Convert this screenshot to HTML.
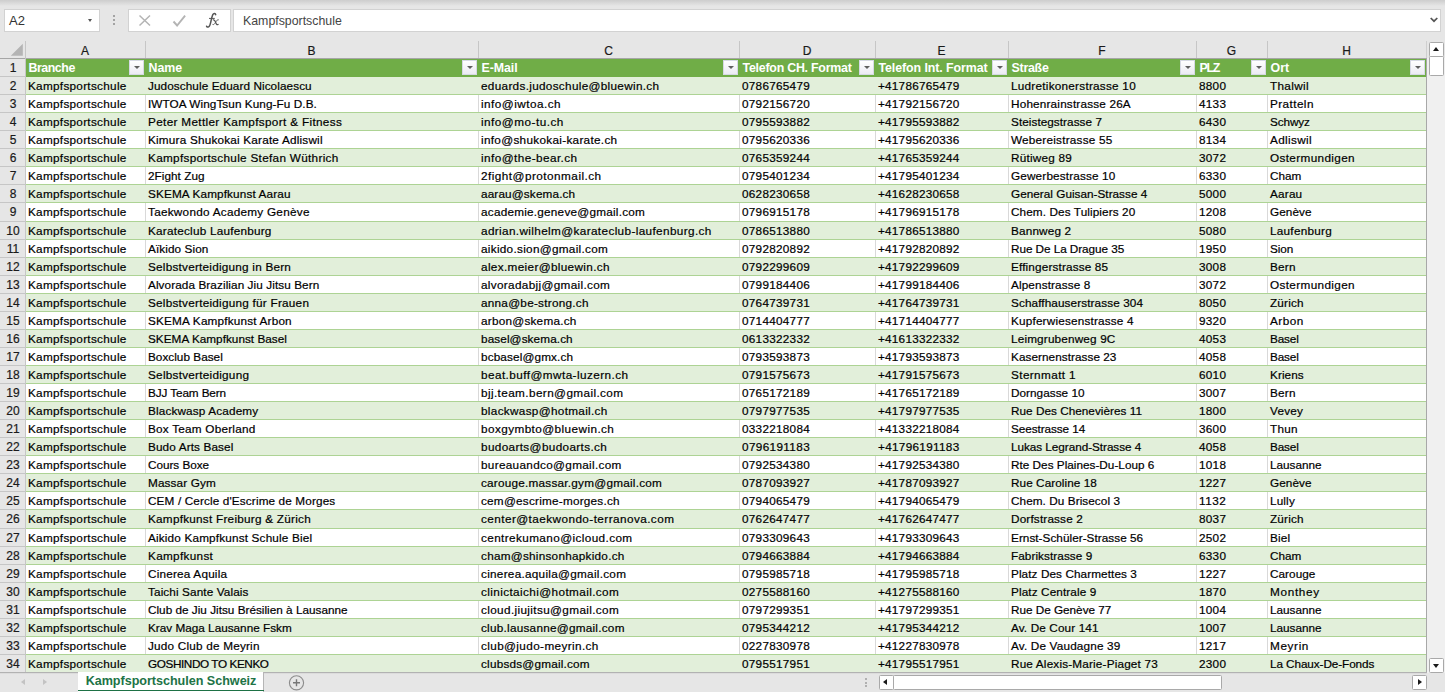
<!DOCTYPE html>
<html><head><meta charset="utf-8"><title>Kampfsportschulen Schweiz</title>
<style>
html,body{margin:0;padding:0}
body{width:1445px;height:692px;overflow:hidden;position:relative;background:#e6e6e6;font-family:"Liberation Sans",sans-serif;color:#000}
.abs{position:absolute}
#topgrad{left:0;top:0;width:1445px;height:6px;background:linear-gradient(#cdcdcd,#e6e6e6)}
.box{position:absolute;background:#fff;border:1px solid #d2d2d2;box-sizing:border-box}
.cell{position:absolute;white-space:nowrap;overflow:hidden;font-size:11.75px;line-height:18.06px;height:18.06px;padding-left:3.0px;box-sizing:border-box;-webkit-text-stroke:0.2px #000}
.hc{position:absolute;font-size:12px;text-align:center;line-height:18px;height:17px;color:#1a1a1a;-webkit-text-stroke:0.2px #1a1a1a}
.rn{position:absolute;left:0.5px;width:25px;text-align:center;font-size:12px;color:#1a1a1a;-webkit-text-stroke:0.2px #1a1a1a}
.hd{font-weight:bold;color:#fff;font-size:12.4px;padding-left:3.5px;-webkit-text-stroke:0}
.fb{position:absolute;width:15px;height:15px;box-sizing:border-box;background:linear-gradient(#ffffff,#ebebf3);border:1px solid #d6d9e4}
.fb:after{content:"";position:absolute;left:3.5px;top:5px;border-left:3px solid transparent;border-right:3px solid transparent;border-top:3.5px solid #5f5f5f}
.vl{position:absolute;width:1px}
.hl{position:absolute;height:1px}
</style></head><body>
<div class="abs" id="topgrad"></div>

<div class="box" style="left:4px;top:9px;width:96px;height:23px"></div>
<div class="abs" style="left:9px;top:12px;font-size:13px;line-height:17px;color:#333">A2</div>
<div class="abs" style="left:88px;top:19px;border-left:2.7px solid transparent;border-right:2.7px solid transparent;border-top:3px solid #555"></div>
<div class="abs" style="left:113px;top:15px;width:2px;height:2px;background:#a3a3a3"></div>
<div class="abs" style="left:113px;top:19px;width:2px;height:2px;background:#a3a3a3"></div>
<div class="abs" style="left:113px;top:23px;width:2px;height:2px;background:#a3a3a3"></div>
<div class="box" style="left:128px;top:9px;width:103px;height:23px"></div>
<svg class="abs" style="left:128px;top:9px" width="103" height="23" viewBox="0 0 103 23"><g fill="none" stroke="#b4b4b4"><path stroke-width="1.5" d="M11.5 6.5l10.5 10M22 6.5l-10.5 10"/><path stroke-width="1.9" d="M45.5 12.5l3.6 4 8-9.8"/></g><g fill="none" stroke="#555" stroke-linecap="round"><path stroke-width="1.5" d="M87.7 5.7C87.5 4.2 85.6 4 84.8 5.6C84 7.2 83.6 9.5 83 12C82.4 14.6 82 17.4 80.6 17.9C79.6 18.3 78.8 17.9 78.6 17.2"/><path stroke-width="1" d="M81.4 9.4H86.4"/><path stroke-width="1.25" d="M85.3 10.9C86.5 10.5 87 11.6 87.6 13.2C88.2 15 88.8 16 90.1 15.5"/><path stroke-width="0.9" d="M90.4 10.7C89.5 10.4 88.6 11.5 87.6 13.2C86.6 15 85.8 16 84.9 15.6"/></g></svg>
<div class="box" style="left:233px;top:9px;width:1208px;height:23px"></div>
<div class="abs" style="left:243px;top:13px;font-size:12.35px;line-height:17px;color:#444">Kampfsportschule</div>
<svg class="abs" style="left:1428.6px;top:16.4px" width="10" height="8" viewBox="0 0 10 8"><path d="M1.7 2l3.3 3.2L8.3 2" fill="none" stroke="#555" stroke-width="1.7"/></svg>
<svg class="abs" style="left:0;top:41px" width="25" height="17"><path d="M22.8 2.8v12h-12z" fill="#b4b4b4"/></svg>
<div class="hc" style="left:25px;top:42px;width:120px">A</div>
<div class="hc" style="left:145px;top:42px;width:333px">B</div>
<div class="hc" style="left:478px;top:42px;width:261px">C</div>
<div class="hc" style="left:739px;top:42px;width:136px">D</div>
<div class="hc" style="left:875px;top:42px;width:133px">E</div>
<div class="hc" style="left:1008px;top:42px;width:188px">F</div>
<div class="hc" style="left:1196px;top:42px;width:71px">G</div>
<div class="hc" style="left:1267px;top:42px;width:159px">H</div>
<div class="vl" style="left:25px;top:41px;height:17px;background:#c6c6c6"></div>
<div class="vl" style="left:145px;top:41px;height:17px;background:#c6c6c6"></div>
<div class="vl" style="left:478px;top:41px;height:17px;background:#c6c6c6"></div>
<div class="vl" style="left:739px;top:41px;height:17px;background:#c6c6c6"></div>
<div class="vl" style="left:875px;top:41px;height:17px;background:#c6c6c6"></div>
<div class="vl" style="left:1008px;top:41px;height:17px;background:#c6c6c6"></div>
<div class="vl" style="left:1196px;top:41px;height:17px;background:#c6c6c6"></div>
<div class="vl" style="left:1267px;top:41px;height:17px;background:#c6c6c6"></div>
<div class="vl" style="left:1426px;top:41px;height:17px;background:#c6c6c6"></div>
<div class="hl" style="left:0;top:58px;width:1427px;background:#a6a6a6"></div>
<div class="abs" style="left:25px;top:59.0px;width:1401px;height:614.04px;background:#fff"></div>
<div class="abs" style="left:25px;top:59px;width:1401px;height:18px;background:#70ad47"></div>
<div class="rn" style="top:59px;height:18px;line-height:18px">1</div>
<div class="hl" style="left:0;top:76px;width:25px;background:#c6c6c6"></div>
<div class="cell hd" style="left:25px;top:59px;width:120px;letter-spacing:-0.469px">Branche</div>
<div class="cell hd" style="left:145px;top:59px;width:333px;letter-spacing:-0.043px">Name</div>
<div class="cell hd" style="left:478px;top:59px;width:261px;letter-spacing:-0.068px">E-Mail</div>
<div class="cell hd" style="left:739px;top:59px;width:136px;letter-spacing:-0.236px">Telefon CH. Format</div>
<div class="cell hd" style="left:875px;top:59px;width:133px;letter-spacing:-0.085px">Telefon Int. Format</div>
<div class="cell hd" style="left:1008px;top:59px;width:188px;letter-spacing:-0.248px">Straße</div>
<div class="cell hd" style="left:1196px;top:59px;width:71px;letter-spacing:-1.306px">PLZ</div>
<div class="cell hd" style="left:1267px;top:59px;width:159px;letter-spacing:0.049px">Ort</div>
<div class="fb" style="left:129px;top:60px"></div>
<div class="fb" style="left:462px;top:60px"></div>
<div class="fb" style="left:723px;top:60px"></div>
<div class="fb" style="left:859px;top:60px"></div>
<div class="fb" style="left:992px;top:60px"></div>
<div class="fb" style="left:1180px;top:60px"></div>
<div class="fb" style="left:1251px;top:60px"></div>
<div class="fb" style="left:1410px;top:60px"></div>
<div class="abs" style="left:25px;top:77px;width:1401px;height:18px;background:#e2efda"></div>
<div class="hl" style="left:25px;top:94px;width:1401px;background:#add394"></div>
<div class="rn" style="top:77px;height:18px;line-height:18px">2</div>
<div class="hl" style="left:0;top:94px;width:25px;background:#c6c6c6"></div>
<div class="cell" style="left:25px;top:77px;width:120px;letter-spacing:0.284px">Kampfsportschule</div>
<div class="cell" style="left:145px;top:77px;width:333px;letter-spacing:0.085px">Judoschule Eduard Nicolaescu</div>
<div class="cell" style="left:478px;top:77px;width:261px;letter-spacing:0.311px">eduards.judoschule@bluewin.ch</div>
<div class="cell" style="left:739px;top:77px;width:136px;letter-spacing:0.268px">0786765479</div>
<div class="cell" style="left:875px;top:77px;width:133px;letter-spacing:0.231px">+41786765479</div>
<div class="cell" style="left:1008px;top:77px;width:188px;letter-spacing:0.245px">Ludretikonerstrasse 10</div>
<div class="cell" style="left:1196px;top:77px;width:71px;letter-spacing:0.269px">8800</div>
<div class="cell" style="left:1267px;top:77px;width:159px;letter-spacing:0.321px">Thalwil</div>
<div class="hl" style="left:25px;top:112px;width:1401px;background:#add394"></div>
<div class="rn" style="top:95px;height:18px;line-height:18px">3</div>
<div class="hl" style="left:0;top:112px;width:25px;background:#c6c6c6"></div>
<div class="cell" style="left:25px;top:95px;width:120px;letter-spacing:0.284px">Kampfsportschule</div>
<div class="cell" style="left:145px;top:95px;width:333px;letter-spacing:0.072px">IWTOA WingTsun Kung-Fu D.B.</div>
<div class="cell" style="left:478px;top:95px;width:261px;letter-spacing:0.467px">info@iwtoa.ch</div>
<div class="cell" style="left:739px;top:95px;width:136px;letter-spacing:0.268px">0792156720</div>
<div class="cell" style="left:875px;top:95px;width:133px;letter-spacing:0.231px">+41792156720</div>
<div class="cell" style="left:1008px;top:95px;width:188px;letter-spacing:0.181px">Hohenrainstrasse 26A</div>
<div class="cell" style="left:1196px;top:95px;width:71px;letter-spacing:0.269px">4133</div>
<div class="cell" style="left:1267px;top:95px;width:159px;letter-spacing:0.418px">Pratteln</div>
<div class="abs" style="left:25px;top:113px;width:1401px;height:18px;background:#e2efda"></div>
<div class="hl" style="left:25px;top:130px;width:1401px;background:#add394"></div>
<div class="rn" style="top:113px;height:18px;line-height:18px">4</div>
<div class="hl" style="left:0;top:130px;width:25px;background:#c6c6c6"></div>
<div class="cell" style="left:25px;top:113px;width:120px;letter-spacing:0.284px">Kampfsportschule</div>
<div class="cell" style="left:145px;top:113px;width:333px;letter-spacing:0.332px">Peter Mettler Kampfsport &amp; Fitness</div>
<div class="cell" style="left:478px;top:113px;width:261px;letter-spacing:0.480px">info@mo-tu.ch</div>
<div class="cell" style="left:739px;top:113px;width:136px;letter-spacing:0.268px">0795593882</div>
<div class="cell" style="left:875px;top:113px;width:133px;letter-spacing:0.231px">+41795593882</div>
<div class="cell" style="left:1008px;top:113px;width:188px;letter-spacing:0.052px">Steistegstrasse 7</div>
<div class="cell" style="left:1196px;top:113px;width:71px;letter-spacing:0.269px">6430</div>
<div class="cell" style="left:1267px;top:113px;width:159px;letter-spacing:-0.104px">Schwyz</div>
<div class="hl" style="left:25px;top:148px;width:1401px;background:#add394"></div>
<div class="rn" style="top:131px;height:18px;line-height:18px">5</div>
<div class="hl" style="left:0;top:148px;width:25px;background:#c6c6c6"></div>
<div class="cell" style="left:25px;top:131px;width:120px;letter-spacing:0.284px">Kampfsportschule</div>
<div class="cell" style="left:145px;top:131px;width:333px;letter-spacing:0.200px">Kimura Shukokai Karate Adliswil</div>
<div class="cell" style="left:478px;top:131px;width:261px;letter-spacing:0.302px">info@shukokai-karate.ch</div>
<div class="cell" style="left:739px;top:131px;width:136px;letter-spacing:0.268px">0795620336</div>
<div class="cell" style="left:875px;top:131px;width:133px;letter-spacing:0.231px">+41795620336</div>
<div class="cell" style="left:1008px;top:131px;width:188px;letter-spacing:0.219px">Webereistrasse 55</div>
<div class="cell" style="left:1196px;top:131px;width:71px;letter-spacing:0.269px">8134</div>
<div class="cell" style="left:1267px;top:131px;width:159px;letter-spacing:0.345px">Adliswil</div>
<div class="abs" style="left:25px;top:149px;width:1401px;height:18px;background:#e2efda"></div>
<div class="hl" style="left:25px;top:166px;width:1401px;background:#add394"></div>
<div class="rn" style="top:149px;height:18px;line-height:18px">6</div>
<div class="hl" style="left:0;top:166px;width:25px;background:#c6c6c6"></div>
<div class="cell" style="left:25px;top:149px;width:120px;letter-spacing:0.284px">Kampfsportschule</div>
<div class="cell" style="left:145px;top:149px;width:333px;letter-spacing:0.302px">Kampfsportschule Stefan Wüthrich</div>
<div class="cell" style="left:478px;top:149px;width:261px;letter-spacing:0.430px">info@the-bear.ch</div>
<div class="cell" style="left:739px;top:149px;width:136px;letter-spacing:0.268px">0765359244</div>
<div class="cell" style="left:875px;top:149px;width:133px;letter-spacing:0.231px">+41765359244</div>
<div class="cell" style="left:1008px;top:149px;width:188px;letter-spacing:0.234px">Rütiweg 89</div>
<div class="cell" style="left:1196px;top:149px;width:71px;letter-spacing:0.269px">3072</div>
<div class="cell" style="left:1267px;top:149px;width:159px;letter-spacing:0.356px">Ostermundigen</div>
<div class="hl" style="left:25px;top:184px;width:1401px;background:#add394"></div>
<div class="rn" style="top:167px;height:18px;line-height:18px">7</div>
<div class="hl" style="left:0;top:184px;width:25px;background:#c6c6c6"></div>
<div class="cell" style="left:25px;top:167px;width:120px;letter-spacing:0.284px">Kampfsportschule</div>
<div class="cell" style="left:145px;top:167px;width:333px;letter-spacing:0.041px">2Fight Zug</div>
<div class="cell" style="left:478px;top:167px;width:261px;letter-spacing:0.471px">2fight@protonmail.ch</div>
<div class="cell" style="left:739px;top:167px;width:136px;letter-spacing:0.268px">0795401234</div>
<div class="cell" style="left:875px;top:167px;width:133px;letter-spacing:0.231px">+41795401234</div>
<div class="cell" style="left:1008px;top:167px;width:188px;letter-spacing:0.154px">Gewerbestrasse 10</div>
<div class="cell" style="left:1196px;top:167px;width:71px;letter-spacing:0.269px">6330</div>
<div class="cell" style="left:1267px;top:167px;width:159px;letter-spacing:0.001px">Cham</div>
<div class="abs" style="left:25px;top:185px;width:1401px;height:18px;background:#e2efda"></div>
<div class="hl" style="left:25px;top:202px;width:1401px;background:#add394"></div>
<div class="rn" style="top:185px;height:18px;line-height:18px">8</div>
<div class="hl" style="left:0;top:202px;width:25px;background:#c6c6c6"></div>
<div class="cell" style="left:25px;top:185px;width:120px;letter-spacing:0.284px">Kampfsportschule</div>
<div class="cell" style="left:145px;top:185px;width:333px;letter-spacing:0.126px">SKEMA Kampfkunst Aarau</div>
<div class="cell" style="left:478px;top:185px;width:261px;letter-spacing:0.145px">aarau@skema.ch</div>
<div class="cell" style="left:739px;top:185px;width:136px;letter-spacing:0.268px">0628230658</div>
<div class="cell" style="left:875px;top:185px;width:133px;letter-spacing:0.231px">+41628230658</div>
<div class="cell" style="left:1008px;top:185px;width:188px;letter-spacing:0.019px">General Guisan-Strasse 4</div>
<div class="cell" style="left:1196px;top:185px;width:71px;letter-spacing:0.269px">5000</div>
<div class="cell" style="left:1267px;top:185px;width:159px;letter-spacing:0.199px">Aarau</div>
<div class="hl" style="left:25px;top:221px;width:1401px;background:#add394"></div>
<div class="rn" style="top:203px;height:19px;line-height:19px">9</div>
<div class="hl" style="left:0;top:221px;width:25px;background:#c6c6c6"></div>
<div class="cell" style="left:25px;top:203px;width:120px;letter-spacing:0.284px">Kampfsportschule</div>
<div class="cell" style="left:145px;top:203px;width:333px;letter-spacing:0.259px">Taekwondo Academy Genève</div>
<div class="cell" style="left:478px;top:203px;width:261px;letter-spacing:0.234px">academie.geneve@gmail.com</div>
<div class="cell" style="left:739px;top:203px;width:136px;letter-spacing:0.268px">0796915178</div>
<div class="cell" style="left:875px;top:203px;width:133px;letter-spacing:0.231px">+41796915178</div>
<div class="cell" style="left:1008px;top:203px;width:188px;letter-spacing:0.101px">Chem. Des Tulipiers 20</div>
<div class="cell" style="left:1196px;top:203px;width:71px;letter-spacing:0.269px">1208</div>
<div class="cell" style="left:1267px;top:203px;width:159px;letter-spacing:0.079px">Genève</div>
<div class="abs" style="left:25px;top:222px;width:1401px;height:18px;background:#e2efda"></div>
<div class="hl" style="left:25px;top:239px;width:1401px;background:#add394"></div>
<div class="rn" style="top:222px;height:18px;line-height:18px">10</div>
<div class="hl" style="left:0;top:239px;width:25px;background:#c6c6c6"></div>
<div class="cell" style="left:25px;top:222px;width:120px;letter-spacing:0.284px">Kampfsportschule</div>
<div class="cell" style="left:145px;top:222px;width:333px;letter-spacing:0.223px">Karateclub Laufenburg</div>
<div class="cell" style="left:478px;top:222px;width:261px;letter-spacing:0.367px">adrian.wilhelm@karateclub-laufenburg.ch</div>
<div class="cell" style="left:739px;top:222px;width:136px;letter-spacing:0.268px">0786513880</div>
<div class="cell" style="left:875px;top:222px;width:133px;letter-spacing:0.231px">+41786513880</div>
<div class="cell" style="left:1008px;top:222px;width:188px;letter-spacing:0.162px">Bannweg 2</div>
<div class="cell" style="left:1196px;top:222px;width:71px;letter-spacing:0.269px">5080</div>
<div class="cell" style="left:1267px;top:222px;width:159px;letter-spacing:0.256px">Laufenburg</div>
<div class="hl" style="left:25px;top:257px;width:1401px;background:#add394"></div>
<div class="rn" style="top:240px;height:18px;line-height:18px">11</div>
<div class="hl" style="left:0;top:257px;width:25px;background:#c6c6c6"></div>
<div class="cell" style="left:25px;top:240px;width:120px;letter-spacing:0.284px">Kampfsportschule</div>
<div class="cell" style="left:145px;top:240px;width:333px;letter-spacing:0.097px">Aïkido Sion</div>
<div class="cell" style="left:478px;top:240px;width:261px;letter-spacing:0.290px">aikido.sion@gmail.com</div>
<div class="cell" style="left:739px;top:240px;width:136px;letter-spacing:0.268px">0792820892</div>
<div class="cell" style="left:875px;top:240px;width:133px;letter-spacing:0.231px">+41792820892</div>
<div class="cell" style="left:1008px;top:240px;width:188px;letter-spacing:-0.060px">Rue De La Drague 35</div>
<div class="cell" style="left:1196px;top:240px;width:71px;letter-spacing:0.269px">1950</div>
<div class="cell" style="left:1267px;top:240px;width:159px;letter-spacing:-0.045px">Sion</div>
<div class="abs" style="left:25px;top:258px;width:1401px;height:18px;background:#e2efda"></div>
<div class="hl" style="left:25px;top:275px;width:1401px;background:#add394"></div>
<div class="rn" style="top:258px;height:18px;line-height:18px">12</div>
<div class="hl" style="left:0;top:275px;width:25px;background:#c6c6c6"></div>
<div class="cell" style="left:25px;top:258px;width:120px;letter-spacing:0.284px">Kampfsportschule</div>
<div class="cell" style="left:145px;top:258px;width:333px;letter-spacing:0.229px">Selbstverteidigung in Bern</div>
<div class="cell" style="left:478px;top:258px;width:261px;letter-spacing:0.344px">alex.meier@bluewin.ch</div>
<div class="cell" style="left:739px;top:258px;width:136px;letter-spacing:0.268px">0792299609</div>
<div class="cell" style="left:875px;top:258px;width:133px;letter-spacing:0.231px">+41792299609</div>
<div class="cell" style="left:1008px;top:258px;width:188px;letter-spacing:0.151px">Effingerstrasse 85</div>
<div class="cell" style="left:1196px;top:258px;width:71px;letter-spacing:0.269px">3008</div>
<div class="cell" style="left:1267px;top:258px;width:159px;letter-spacing:0.221px">Bern</div>
<div class="hl" style="left:25px;top:293px;width:1401px;background:#add394"></div>
<div class="rn" style="top:276px;height:18px;line-height:18px">13</div>
<div class="hl" style="left:0;top:293px;width:25px;background:#c6c6c6"></div>
<div class="cell" style="left:25px;top:276px;width:120px;letter-spacing:0.284px">Kampfsportschule</div>
<div class="cell" style="left:145px;top:276px;width:333px;letter-spacing:0.087px">Alvorada Brazilian Jiu Jitsu Bern</div>
<div class="cell" style="left:478px;top:276px;width:261px;letter-spacing:0.327px">alvoradabjj@gmail.com</div>
<div class="cell" style="left:739px;top:276px;width:136px;letter-spacing:0.268px">0799184406</div>
<div class="cell" style="left:875px;top:276px;width:133px;letter-spacing:0.231px">+41799184406</div>
<div class="cell" style="left:1008px;top:276px;width:188px;letter-spacing:0.125px">Alpenstrasse 8</div>
<div class="cell" style="left:1196px;top:276px;width:71px;letter-spacing:0.269px">3072</div>
<div class="cell" style="left:1267px;top:276px;width:159px;letter-spacing:0.356px">Ostermundigen</div>
<div class="abs" style="left:25px;top:294px;width:1401px;height:18px;background:#e2efda"></div>
<div class="hl" style="left:25px;top:311px;width:1401px;background:#add394"></div>
<div class="rn" style="top:294px;height:18px;line-height:18px">14</div>
<div class="hl" style="left:0;top:311px;width:25px;background:#c6c6c6"></div>
<div class="cell" style="left:25px;top:294px;width:120px;letter-spacing:0.284px">Kampfsportschule</div>
<div class="cell" style="left:145px;top:294px;width:333px;letter-spacing:0.242px">Selbstverteidigung für Frauen</div>
<div class="cell" style="left:478px;top:294px;width:261px;letter-spacing:0.256px">anna@be-strong.ch</div>
<div class="cell" style="left:739px;top:294px;width:136px;letter-spacing:0.268px">0764739731</div>
<div class="cell" style="left:875px;top:294px;width:133px;letter-spacing:0.231px">+41764739731</div>
<div class="cell" style="left:1008px;top:294px;width:188px;letter-spacing:0.101px">Schaffhauserstrasse 304</div>
<div class="cell" style="left:1196px;top:294px;width:71px;letter-spacing:0.269px">8050</div>
<div class="cell" style="left:1267px;top:294px;width:159px;letter-spacing:0.191px">Zürich</div>
<div class="hl" style="left:25px;top:329px;width:1401px;background:#add394"></div>
<div class="rn" style="top:312px;height:18px;line-height:18px">15</div>
<div class="hl" style="left:0;top:329px;width:25px;background:#c6c6c6"></div>
<div class="cell" style="left:25px;top:312px;width:120px;letter-spacing:0.284px">Kampfsportschule</div>
<div class="cell" style="left:145px;top:312px;width:333px;letter-spacing:0.184px">SKEMA Kampfkunst Arbon</div>
<div class="cell" style="left:478px;top:312px;width:261px;letter-spacing:0.236px">arbon@skema.ch</div>
<div class="cell" style="left:739px;top:312px;width:136px;letter-spacing:0.268px">0714404777</div>
<div class="cell" style="left:875px;top:312px;width:133px;letter-spacing:0.231px">+41714404777</div>
<div class="cell" style="left:1008px;top:312px;width:188px;letter-spacing:0.183px">Kupferwiesenstrasse 4</div>
<div class="cell" style="left:1196px;top:312px;width:71px;letter-spacing:0.269px">9320</div>
<div class="cell" style="left:1267px;top:312px;width:159px;letter-spacing:0.452px">Arbon</div>
<div class="abs" style="left:25px;top:330px;width:1401px;height:18px;background:#e2efda"></div>
<div class="hl" style="left:25px;top:347px;width:1401px;background:#add394"></div>
<div class="rn" style="top:330px;height:18px;line-height:18px">16</div>
<div class="hl" style="left:0;top:347px;width:25px;background:#c6c6c6"></div>
<div class="cell" style="left:25px;top:330px;width:120px;letter-spacing:0.284px">Kampfsportschule</div>
<div class="cell" style="left:145px;top:330px;width:333px;letter-spacing:0.022px">SKEMA Kampfkunst Basel</div>
<div class="cell" style="left:478px;top:330px;width:261px;letter-spacing:0.104px">basel@skema.ch</div>
<div class="cell" style="left:739px;top:330px;width:136px;letter-spacing:0.268px">0613322332</div>
<div class="cell" style="left:875px;top:330px;width:133px;letter-spacing:0.231px">+41613322332</div>
<div class="cell" style="left:1008px;top:330px;width:188px;letter-spacing:0.164px">Leimgrubenweg 9C</div>
<div class="cell" style="left:1196px;top:330px;width:71px;letter-spacing:0.269px">4053</div>
<div class="cell" style="left:1267px;top:330px;width:159px;letter-spacing:-0.135px">Basel</div>
<div class="hl" style="left:25px;top:365px;width:1401px;background:#add394"></div>
<div class="rn" style="top:348px;height:18px;line-height:18px">17</div>
<div class="hl" style="left:0;top:365px;width:25px;background:#c6c6c6"></div>
<div class="cell" style="left:25px;top:348px;width:120px;letter-spacing:0.284px">Kampfsportschule</div>
<div class="cell" style="left:145px;top:348px;width:333px;letter-spacing:0.025px">Boxclub Basel</div>
<div class="cell" style="left:478px;top:348px;width:261px;letter-spacing:0.132px">bcbasel@gmx.ch</div>
<div class="cell" style="left:739px;top:348px;width:136px;letter-spacing:0.268px">0793593873</div>
<div class="cell" style="left:875px;top:348px;width:133px;letter-spacing:0.231px">+41793593873</div>
<div class="cell" style="left:1008px;top:348px;width:188px;letter-spacing:0.053px">Kasernenstrasse 23</div>
<div class="cell" style="left:1196px;top:348px;width:71px;letter-spacing:0.269px">4058</div>
<div class="cell" style="left:1267px;top:348px;width:159px;letter-spacing:-0.135px">Basel</div>
<div class="abs" style="left:25px;top:366px;width:1401px;height:18px;background:#e2efda"></div>
<div class="hl" style="left:25px;top:383px;width:1401px;background:#add394"></div>
<div class="rn" style="top:366px;height:18px;line-height:18px">18</div>
<div class="hl" style="left:0;top:383px;width:25px;background:#c6c6c6"></div>
<div class="cell" style="left:25px;top:366px;width:120px;letter-spacing:0.284px">Kampfsportschule</div>
<div class="cell" style="left:145px;top:366px;width:333px;letter-spacing:0.253px">Selbstverteidigung</div>
<div class="cell" style="left:478px;top:366px;width:261px;letter-spacing:0.436px">beat.buff@mwta-luzern.ch</div>
<div class="cell" style="left:739px;top:366px;width:136px;letter-spacing:0.268px">0791575673</div>
<div class="cell" style="left:875px;top:366px;width:133px;letter-spacing:0.231px">+41791575673</div>
<div class="cell" style="left:1008px;top:366px;width:188px;letter-spacing:0.391px">Sternmatt 1</div>
<div class="cell" style="left:1196px;top:366px;width:71px;letter-spacing:0.269px">6010</div>
<div class="cell" style="left:1267px;top:366px;width:159px;letter-spacing:0.066px">Kriens</div>
<div class="hl" style="left:25px;top:401px;width:1401px;background:#add394"></div>
<div class="rn" style="top:384px;height:18px;line-height:18px">19</div>
<div class="hl" style="left:0;top:401px;width:25px;background:#c6c6c6"></div>
<div class="cell" style="left:25px;top:384px;width:120px;letter-spacing:0.284px">Kampfsportschule</div>
<div class="cell" style="left:145px;top:384px;width:333px;letter-spacing:-0.112px">BJJ Team Bern</div>
<div class="cell" style="left:478px;top:384px;width:261px;letter-spacing:0.395px">bjj.team.bern@gmail.com</div>
<div class="cell" style="left:739px;top:384px;width:136px;letter-spacing:0.268px">0765172189</div>
<div class="cell" style="left:875px;top:384px;width:133px;letter-spacing:0.231px">+41765172189</div>
<div class="cell" style="left:1008px;top:384px;width:188px;letter-spacing:0.038px">Dorngasse 10</div>
<div class="cell" style="left:1196px;top:384px;width:71px;letter-spacing:0.269px">3007</div>
<div class="cell" style="left:1267px;top:384px;width:159px;letter-spacing:0.221px">Bern</div>
<div class="abs" style="left:25px;top:402px;width:1401px;height:18px;background:#e2efda"></div>
<div class="hl" style="left:25px;top:419px;width:1401px;background:#add394"></div>
<div class="rn" style="top:402px;height:18px;line-height:18px">20</div>
<div class="hl" style="left:0;top:419px;width:25px;background:#c6c6c6"></div>
<div class="cell" style="left:25px;top:402px;width:120px;letter-spacing:0.284px">Kampfsportschule</div>
<div class="cell" style="left:145px;top:402px;width:333px;letter-spacing:0.151px">Blackwasp Academy</div>
<div class="cell" style="left:478px;top:402px;width:261px;letter-spacing:0.316px">blackwasp@hotmail.ch</div>
<div class="cell" style="left:739px;top:402px;width:136px;letter-spacing:0.268px">0797977535</div>
<div class="cell" style="left:875px;top:402px;width:133px;letter-spacing:0.231px">+41797977535</div>
<div class="cell" style="left:1008px;top:402px;width:188px;letter-spacing:0.024px">Rue Des Chenevières 11</div>
<div class="cell" style="left:1196px;top:402px;width:71px;letter-spacing:0.269px">1800</div>
<div class="cell" style="left:1267px;top:402px;width:159px;letter-spacing:0.221px">Vevey</div>
<div class="hl" style="left:25px;top:437px;width:1401px;background:#add394"></div>
<div class="rn" style="top:420px;height:18px;line-height:18px">21</div>
<div class="hl" style="left:0;top:437px;width:25px;background:#c6c6c6"></div>
<div class="cell" style="left:25px;top:420px;width:120px;letter-spacing:0.284px">Kampfsportschule</div>
<div class="cell" style="left:145px;top:420px;width:333px;letter-spacing:0.227px">Box Team Oberland</div>
<div class="cell" style="left:478px;top:420px;width:261px;letter-spacing:0.420px">boxgymbto@bluewin.ch</div>
<div class="cell" style="left:739px;top:420px;width:136px;letter-spacing:0.268px">0332218084</div>
<div class="cell" style="left:875px;top:420px;width:133px;letter-spacing:0.231px">+41332218084</div>
<div class="cell" style="left:1008px;top:420px;width:188px;letter-spacing:-0.071px">Seestrasse 14</div>
<div class="cell" style="left:1196px;top:420px;width:71px;letter-spacing:0.269px">3600</div>
<div class="cell" style="left:1267px;top:420px;width:159px;letter-spacing:0.219px">Thun</div>
<div class="abs" style="left:25px;top:438px;width:1401px;height:18px;background:#e2efda"></div>
<div class="hl" style="left:25px;top:455px;width:1401px;background:#add394"></div>
<div class="rn" style="top:438px;height:18px;line-height:18px">22</div>
<div class="hl" style="left:0;top:455px;width:25px;background:#c6c6c6"></div>
<div class="cell" style="left:25px;top:438px;width:120px;letter-spacing:0.284px">Kampfsportschule</div>
<div class="cell" style="left:145px;top:438px;width:333px;letter-spacing:0.123px">Budo Arts Basel</div>
<div class="cell" style="left:478px;top:438px;width:261px;letter-spacing:0.358px">budoarts@budoarts.ch</div>
<div class="cell" style="left:739px;top:438px;width:136px;letter-spacing:0.356px">0796191183</div>
<div class="cell" style="left:875px;top:438px;width:133px;letter-spacing:0.304px">+41796191183</div>
<div class="cell" style="left:1008px;top:438px;width:188px;letter-spacing:-0.046px">Lukas Legrand-Strasse 4</div>
<div class="cell" style="left:1196px;top:438px;width:71px;letter-spacing:0.269px">4058</div>
<div class="cell" style="left:1267px;top:438px;width:159px;letter-spacing:-0.135px">Basel</div>
<div class="hl" style="left:25px;top:473px;width:1401px;background:#add394"></div>
<div class="rn" style="top:456px;height:18px;line-height:18px">23</div>
<div class="hl" style="left:0;top:473px;width:25px;background:#c6c6c6"></div>
<div class="cell" style="left:25px;top:456px;width:120px;letter-spacing:0.284px">Kampfsportschule</div>
<div class="cell" style="left:145px;top:456px;width:333px;letter-spacing:-0.029px">Cours Boxe</div>
<div class="cell" style="left:478px;top:456px;width:261px;letter-spacing:0.314px">bureauandco@gmail.com</div>
<div class="cell" style="left:739px;top:456px;width:136px;letter-spacing:0.268px">0792534380</div>
<div class="cell" style="left:875px;top:456px;width:133px;letter-spacing:0.231px">+41792534380</div>
<div class="cell" style="left:1008px;top:456px;width:188px;letter-spacing:0.013px">Rte Des Plaines-Du-Loup 6</div>
<div class="cell" style="left:1196px;top:456px;width:71px;letter-spacing:0.269px">1018</div>
<div class="cell" style="left:1267px;top:456px;width:159px;letter-spacing:-0.008px">Lausanne</div>
<div class="abs" style="left:25px;top:474px;width:1401px;height:18px;background:#e2efda"></div>
<div class="hl" style="left:25px;top:491px;width:1401px;background:#add394"></div>
<div class="rn" style="top:474px;height:18px;line-height:18px">24</div>
<div class="hl" style="left:0;top:491px;width:25px;background:#c6c6c6"></div>
<div class="cell" style="left:25px;top:474px;width:120px;letter-spacing:0.284px">Kampfsportschule</div>
<div class="cell" style="left:145px;top:474px;width:333px;letter-spacing:0.122px">Massar Gym</div>
<div class="cell" style="left:478px;top:474px;width:261px;letter-spacing:0.232px">carouge.massar.gym@gmail.com</div>
<div class="cell" style="left:739px;top:474px;width:136px;letter-spacing:0.268px">0787093927</div>
<div class="cell" style="left:875px;top:474px;width:133px;letter-spacing:0.231px">+41787093927</div>
<div class="cell" style="left:1008px;top:474px;width:188px;letter-spacing:0.065px">Rue Caroline 18</div>
<div class="cell" style="left:1196px;top:474px;width:71px;letter-spacing:0.269px">1227</div>
<div class="cell" style="left:1267px;top:474px;width:159px;letter-spacing:0.079px">Genève</div>
<div class="hl" style="left:25px;top:509px;width:1401px;background:#add394"></div>
<div class="rn" style="top:492px;height:18px;line-height:18px">25</div>
<div class="hl" style="left:0;top:509px;width:25px;background:#c6c6c6"></div>
<div class="cell" style="left:25px;top:492px;width:120px;letter-spacing:0.284px">Kampfsportschule</div>
<div class="cell" style="left:145px;top:492px;width:333px;letter-spacing:0.131px">CEM / Cercle d'Escrime de Morges</div>
<div class="cell" style="left:478px;top:492px;width:261px;letter-spacing:0.227px">cem@escrime-morges.ch</div>
<div class="cell" style="left:739px;top:492px;width:136px;letter-spacing:0.268px">0794065479</div>
<div class="cell" style="left:875px;top:492px;width:133px;letter-spacing:0.231px">+41794065479</div>
<div class="cell" style="left:1008px;top:492px;width:188px;letter-spacing:0.066px">Chem. Du Brisecol 3</div>
<div class="cell" style="left:1196px;top:492px;width:71px;letter-spacing:0.484px">1132</div>
<div class="cell" style="left:1267px;top:492px;width:159px;letter-spacing:0.147px">Lully</div>
<div class="abs" style="left:25px;top:510px;width:1401px;height:19px;background:#e2efda"></div>
<div class="hl" style="left:25px;top:528px;width:1401px;background:#add394"></div>
<div class="rn" style="top:510px;height:19px;line-height:19px">26</div>
<div class="hl" style="left:0;top:528px;width:25px;background:#c6c6c6"></div>
<div class="cell" style="left:25px;top:510px;width:120px;letter-spacing:0.284px">Kampfsportschule</div>
<div class="cell" style="left:145px;top:510px;width:333px;letter-spacing:0.246px">Kampfkunst Freiburg &amp; Zürich</div>
<div class="cell" style="left:478px;top:510px;width:261px;letter-spacing:0.431px">center@taekwondo-terranova.com</div>
<div class="cell" style="left:739px;top:510px;width:136px;letter-spacing:0.268px">0762647477</div>
<div class="cell" style="left:875px;top:510px;width:133px;letter-spacing:0.231px">+41762647477</div>
<div class="cell" style="left:1008px;top:510px;width:188px;letter-spacing:0.161px">Dorfstrasse 2</div>
<div class="cell" style="left:1196px;top:510px;width:71px;letter-spacing:0.269px">8037</div>
<div class="cell" style="left:1267px;top:510px;width:159px;letter-spacing:0.191px">Zürich</div>
<div class="hl" style="left:25px;top:546px;width:1401px;background:#add394"></div>
<div class="rn" style="top:529px;height:18px;line-height:18px">27</div>
<div class="hl" style="left:0;top:546px;width:25px;background:#c6c6c6"></div>
<div class="cell" style="left:25px;top:529px;width:120px;letter-spacing:0.284px">Kampfsportschule</div>
<div class="cell" style="left:145px;top:529px;width:333px;letter-spacing:0.169px">Aikido Kampfkunst Schule Biel</div>
<div class="cell" style="left:478px;top:529px;width:261px;letter-spacing:0.390px">centrekumano@icloud.com</div>
<div class="cell" style="left:739px;top:529px;width:136px;letter-spacing:0.268px">0793309643</div>
<div class="cell" style="left:875px;top:529px;width:133px;letter-spacing:0.231px">+41793309643</div>
<div class="cell" style="left:1008px;top:529px;width:188px;letter-spacing:0.038px">Ernst-Schüler-Strasse 56</div>
<div class="cell" style="left:1196px;top:529px;width:71px;letter-spacing:0.269px">2502</div>
<div class="cell" style="left:1267px;top:529px;width:159px;letter-spacing:0.134px">Biel</div>
<div class="abs" style="left:25px;top:547px;width:1401px;height:18px;background:#e2efda"></div>
<div class="hl" style="left:25px;top:564px;width:1401px;background:#add394"></div>
<div class="rn" style="top:547px;height:18px;line-height:18px">28</div>
<div class="hl" style="left:0;top:564px;width:25px;background:#c6c6c6"></div>
<div class="cell" style="left:25px;top:547px;width:120px;letter-spacing:0.284px">Kampfsportschule</div>
<div class="cell" style="left:145px;top:547px;width:333px;letter-spacing:0.316px">Kampfkunst</div>
<div class="cell" style="left:478px;top:547px;width:261px;letter-spacing:0.253px">cham@shinsonhapkido.ch</div>
<div class="cell" style="left:739px;top:547px;width:136px;letter-spacing:0.268px">0794663884</div>
<div class="cell" style="left:875px;top:547px;width:133px;letter-spacing:0.231px">+41794663884</div>
<div class="cell" style="left:1008px;top:547px;width:188px;letter-spacing:0.069px">Fabrikstrasse 9</div>
<div class="cell" style="left:1196px;top:547px;width:71px;letter-spacing:0.269px">6330</div>
<div class="cell" style="left:1267px;top:547px;width:159px;letter-spacing:0.001px">Cham</div>
<div class="hl" style="left:25px;top:582px;width:1401px;background:#add394"></div>
<div class="rn" style="top:565px;height:18px;line-height:18px">29</div>
<div class="hl" style="left:0;top:582px;width:25px;background:#c6c6c6"></div>
<div class="cell" style="left:25px;top:565px;width:120px;letter-spacing:0.284px">Kampfsportschule</div>
<div class="cell" style="left:145px;top:565px;width:333px;letter-spacing:0.199px">Cinerea Aquila</div>
<div class="cell" style="left:478px;top:565px;width:261px;letter-spacing:0.274px">cinerea.aquila@gmail.com</div>
<div class="cell" style="left:739px;top:565px;width:136px;letter-spacing:0.268px">0795985718</div>
<div class="cell" style="left:875px;top:565px;width:133px;letter-spacing:0.231px">+41795985718</div>
<div class="cell" style="left:1008px;top:565px;width:188px;letter-spacing:0.086px">Platz Des Charmettes 3</div>
<div class="cell" style="left:1196px;top:565px;width:71px;letter-spacing:0.269px">1227</div>
<div class="cell" style="left:1267px;top:565px;width:159px;letter-spacing:0.044px">Carouge</div>
<div class="abs" style="left:25px;top:583px;width:1401px;height:18px;background:#e2efda"></div>
<div class="hl" style="left:25px;top:600px;width:1401px;background:#add394"></div>
<div class="rn" style="top:583px;height:18px;line-height:18px">30</div>
<div class="hl" style="left:0;top:600px;width:25px;background:#c6c6c6"></div>
<div class="cell" style="left:25px;top:583px;width:120px;letter-spacing:0.284px">Kampfsportschule</div>
<div class="cell" style="left:145px;top:583px;width:333px;letter-spacing:0.114px">Taichi Sante Valais</div>
<div class="cell" style="left:478px;top:583px;width:261px;letter-spacing:0.389px">clinictaichi@hotmail.com</div>
<div class="cell" style="left:739px;top:583px;width:136px;letter-spacing:0.268px">0275588160</div>
<div class="cell" style="left:875px;top:583px;width:133px;letter-spacing:0.231px">+41275588160</div>
<div class="cell" style="left:1008px;top:583px;width:188px;letter-spacing:0.109px">Platz Centrale 9</div>
<div class="cell" style="left:1196px;top:583px;width:71px;letter-spacing:0.269px">1870</div>
<div class="cell" style="left:1267px;top:583px;width:159px;letter-spacing:0.688px">Monthey</div>
<div class="hl" style="left:25px;top:618px;width:1401px;background:#add394"></div>
<div class="rn" style="top:601px;height:18px;line-height:18px">31</div>
<div class="hl" style="left:0;top:618px;width:25px;background:#c6c6c6"></div>
<div class="cell" style="left:25px;top:601px;width:120px;letter-spacing:0.284px">Kampfsportschule</div>
<div class="cell" style="left:145px;top:601px;width:333px;letter-spacing:0.011px">Club de Jiu Jitsu Brésilien à Lausanne</div>
<div class="cell" style="left:478px;top:601px;width:261px;letter-spacing:0.361px">cloud.jiujitsu@gmail.com</div>
<div class="cell" style="left:739px;top:601px;width:136px;letter-spacing:0.268px">0797299351</div>
<div class="cell" style="left:875px;top:601px;width:133px;letter-spacing:0.231px">+41797299351</div>
<div class="cell" style="left:1008px;top:601px;width:188px;letter-spacing:-0.019px">Rue De Genève 77</div>
<div class="cell" style="left:1196px;top:601px;width:71px;letter-spacing:0.269px">1004</div>
<div class="cell" style="left:1267px;top:601px;width:159px;letter-spacing:-0.008px">Lausanne</div>
<div class="abs" style="left:25px;top:619px;width:1401px;height:18px;background:#e2efda"></div>
<div class="hl" style="left:25px;top:636px;width:1401px;background:#add394"></div>
<div class="rn" style="top:619px;height:18px;line-height:18px">32</div>
<div class="hl" style="left:0;top:636px;width:25px;background:#c6c6c6"></div>
<div class="cell" style="left:25px;top:619px;width:120px;letter-spacing:0.284px">Kampfsportschule</div>
<div class="cell" style="left:145px;top:619px;width:333px;letter-spacing:0.001px">Krav Maga Lausanne Fskm</div>
<div class="cell" style="left:478px;top:619px;width:261px;letter-spacing:0.248px">club.lausanne@gmail.com</div>
<div class="cell" style="left:739px;top:619px;width:136px;letter-spacing:0.268px">0795344212</div>
<div class="cell" style="left:875px;top:619px;width:133px;letter-spacing:0.231px">+41795344212</div>
<div class="cell" style="left:1008px;top:619px;width:188px;letter-spacing:0.123px">Av. De Cour 141</div>
<div class="cell" style="left:1196px;top:619px;width:71px;letter-spacing:0.269px">1007</div>
<div class="cell" style="left:1267px;top:619px;width:159px;letter-spacing:-0.008px">Lausanne</div>
<div class="hl" style="left:25px;top:654px;width:1401px;background:#add394"></div>
<div class="rn" style="top:637px;height:18px;line-height:18px">33</div>
<div class="hl" style="left:0;top:654px;width:25px;background:#c6c6c6"></div>
<div class="cell" style="left:25px;top:637px;width:120px;letter-spacing:0.284px">Kampfsportschule</div>
<div class="cell" style="left:145px;top:637px;width:333px;letter-spacing:0.203px">Judo Club de Meyrin</div>
<div class="cell" style="left:478px;top:637px;width:261px;letter-spacing:0.377px">club@judo-meyrin.ch</div>
<div class="cell" style="left:739px;top:637px;width:136px;letter-spacing:0.268px">0227830978</div>
<div class="cell" style="left:875px;top:637px;width:133px;letter-spacing:0.231px">+41227830978</div>
<div class="cell" style="left:1008px;top:637px;width:188px;letter-spacing:0.166px">Av. De Vaudagne 39</div>
<div class="cell" style="left:1196px;top:637px;width:71px;letter-spacing:0.269px">1217</div>
<div class="cell" style="left:1267px;top:637px;width:159px;letter-spacing:0.629px">Meyrin</div>
<div class="abs" style="left:25px;top:655px;width:1401px;height:18px;background:#e2efda"></div>
<div class="hl" style="left:25px;top:672px;width:1401px;background:#add394"></div>
<div class="rn" style="top:655px;height:18px;line-height:18px">34</div>
<div class="hl" style="left:0;top:672px;width:25px;background:#c6c6c6"></div>
<div class="cell" style="left:25px;top:655px;width:120px;letter-spacing:0.284px">Kampfsportschule</div>
<div class="cell" style="left:145px;top:655px;width:333px;letter-spacing:-0.408px">GOSHINDO TO KENKO</div>
<div class="cell" style="left:478px;top:655px;width:261px;letter-spacing:0.208px">clubsds@gmail.com</div>
<div class="cell" style="left:739px;top:655px;width:136px;letter-spacing:0.268px">0795517951</div>
<div class="cell" style="left:875px;top:655px;width:133px;letter-spacing:0.231px">+41795517951</div>
<div class="cell" style="left:1008px;top:655px;width:188px;letter-spacing:0.172px">Rue Alexis-Marie-Piaget 73</div>
<div class="cell" style="left:1196px;top:655px;width:71px;letter-spacing:0.269px">2300</div>
<div class="cell" style="left:1267px;top:655px;width:159px;letter-spacing:-0.089px">La Chaux-De-Fonds</div>
<div class="vl" style="left:145px;top:95px;height:17px;background:#d9d9d9"></div>
<div class="vl" style="left:478px;top:95px;height:17px;background:#d9d9d9"></div>
<div class="vl" style="left:739px;top:95px;height:17px;background:#d9d9d9"></div>
<div class="vl" style="left:875px;top:95px;height:17px;background:#d9d9d9"></div>
<div class="vl" style="left:1008px;top:95px;height:17px;background:#d9d9d9"></div>
<div class="vl" style="left:1196px;top:95px;height:17px;background:#d9d9d9"></div>
<div class="vl" style="left:1267px;top:95px;height:17px;background:#d9d9d9"></div>
<div class="vl" style="left:145px;top:131px;height:17px;background:#d9d9d9"></div>
<div class="vl" style="left:478px;top:131px;height:17px;background:#d9d9d9"></div>
<div class="vl" style="left:739px;top:131px;height:17px;background:#d9d9d9"></div>
<div class="vl" style="left:875px;top:131px;height:17px;background:#d9d9d9"></div>
<div class="vl" style="left:1008px;top:131px;height:17px;background:#d9d9d9"></div>
<div class="vl" style="left:1196px;top:131px;height:17px;background:#d9d9d9"></div>
<div class="vl" style="left:1267px;top:131px;height:17px;background:#d9d9d9"></div>
<div class="vl" style="left:145px;top:167px;height:17px;background:#d9d9d9"></div>
<div class="vl" style="left:478px;top:167px;height:17px;background:#d9d9d9"></div>
<div class="vl" style="left:739px;top:167px;height:17px;background:#d9d9d9"></div>
<div class="vl" style="left:875px;top:167px;height:17px;background:#d9d9d9"></div>
<div class="vl" style="left:1008px;top:167px;height:17px;background:#d9d9d9"></div>
<div class="vl" style="left:1196px;top:167px;height:17px;background:#d9d9d9"></div>
<div class="vl" style="left:1267px;top:167px;height:17px;background:#d9d9d9"></div>
<div class="vl" style="left:145px;top:203px;height:18px;background:#d9d9d9"></div>
<div class="vl" style="left:478px;top:203px;height:18px;background:#d9d9d9"></div>
<div class="vl" style="left:739px;top:203px;height:18px;background:#d9d9d9"></div>
<div class="vl" style="left:875px;top:203px;height:18px;background:#d9d9d9"></div>
<div class="vl" style="left:1008px;top:203px;height:18px;background:#d9d9d9"></div>
<div class="vl" style="left:1196px;top:203px;height:18px;background:#d9d9d9"></div>
<div class="vl" style="left:1267px;top:203px;height:18px;background:#d9d9d9"></div>
<div class="vl" style="left:145px;top:240px;height:17px;background:#d9d9d9"></div>
<div class="vl" style="left:478px;top:240px;height:17px;background:#d9d9d9"></div>
<div class="vl" style="left:739px;top:240px;height:17px;background:#d9d9d9"></div>
<div class="vl" style="left:875px;top:240px;height:17px;background:#d9d9d9"></div>
<div class="vl" style="left:1008px;top:240px;height:17px;background:#d9d9d9"></div>
<div class="vl" style="left:1196px;top:240px;height:17px;background:#d9d9d9"></div>
<div class="vl" style="left:1267px;top:240px;height:17px;background:#d9d9d9"></div>
<div class="vl" style="left:145px;top:276px;height:17px;background:#d9d9d9"></div>
<div class="vl" style="left:478px;top:276px;height:17px;background:#d9d9d9"></div>
<div class="vl" style="left:739px;top:276px;height:17px;background:#d9d9d9"></div>
<div class="vl" style="left:875px;top:276px;height:17px;background:#d9d9d9"></div>
<div class="vl" style="left:1008px;top:276px;height:17px;background:#d9d9d9"></div>
<div class="vl" style="left:1196px;top:276px;height:17px;background:#d9d9d9"></div>
<div class="vl" style="left:1267px;top:276px;height:17px;background:#d9d9d9"></div>
<div class="vl" style="left:145px;top:312px;height:17px;background:#d9d9d9"></div>
<div class="vl" style="left:478px;top:312px;height:17px;background:#d9d9d9"></div>
<div class="vl" style="left:739px;top:312px;height:17px;background:#d9d9d9"></div>
<div class="vl" style="left:875px;top:312px;height:17px;background:#d9d9d9"></div>
<div class="vl" style="left:1008px;top:312px;height:17px;background:#d9d9d9"></div>
<div class="vl" style="left:1196px;top:312px;height:17px;background:#d9d9d9"></div>
<div class="vl" style="left:1267px;top:312px;height:17px;background:#d9d9d9"></div>
<div class="vl" style="left:145px;top:348px;height:17px;background:#d9d9d9"></div>
<div class="vl" style="left:478px;top:348px;height:17px;background:#d9d9d9"></div>
<div class="vl" style="left:739px;top:348px;height:17px;background:#d9d9d9"></div>
<div class="vl" style="left:875px;top:348px;height:17px;background:#d9d9d9"></div>
<div class="vl" style="left:1008px;top:348px;height:17px;background:#d9d9d9"></div>
<div class="vl" style="left:1196px;top:348px;height:17px;background:#d9d9d9"></div>
<div class="vl" style="left:1267px;top:348px;height:17px;background:#d9d9d9"></div>
<div class="vl" style="left:145px;top:384px;height:17px;background:#d9d9d9"></div>
<div class="vl" style="left:478px;top:384px;height:17px;background:#d9d9d9"></div>
<div class="vl" style="left:739px;top:384px;height:17px;background:#d9d9d9"></div>
<div class="vl" style="left:875px;top:384px;height:17px;background:#d9d9d9"></div>
<div class="vl" style="left:1008px;top:384px;height:17px;background:#d9d9d9"></div>
<div class="vl" style="left:1196px;top:384px;height:17px;background:#d9d9d9"></div>
<div class="vl" style="left:1267px;top:384px;height:17px;background:#d9d9d9"></div>
<div class="vl" style="left:145px;top:420px;height:17px;background:#d9d9d9"></div>
<div class="vl" style="left:478px;top:420px;height:17px;background:#d9d9d9"></div>
<div class="vl" style="left:739px;top:420px;height:17px;background:#d9d9d9"></div>
<div class="vl" style="left:875px;top:420px;height:17px;background:#d9d9d9"></div>
<div class="vl" style="left:1008px;top:420px;height:17px;background:#d9d9d9"></div>
<div class="vl" style="left:1196px;top:420px;height:17px;background:#d9d9d9"></div>
<div class="vl" style="left:1267px;top:420px;height:17px;background:#d9d9d9"></div>
<div class="vl" style="left:145px;top:456px;height:17px;background:#d9d9d9"></div>
<div class="vl" style="left:478px;top:456px;height:17px;background:#d9d9d9"></div>
<div class="vl" style="left:739px;top:456px;height:17px;background:#d9d9d9"></div>
<div class="vl" style="left:875px;top:456px;height:17px;background:#d9d9d9"></div>
<div class="vl" style="left:1008px;top:456px;height:17px;background:#d9d9d9"></div>
<div class="vl" style="left:1196px;top:456px;height:17px;background:#d9d9d9"></div>
<div class="vl" style="left:1267px;top:456px;height:17px;background:#d9d9d9"></div>
<div class="vl" style="left:145px;top:492px;height:17px;background:#d9d9d9"></div>
<div class="vl" style="left:478px;top:492px;height:17px;background:#d9d9d9"></div>
<div class="vl" style="left:739px;top:492px;height:17px;background:#d9d9d9"></div>
<div class="vl" style="left:875px;top:492px;height:17px;background:#d9d9d9"></div>
<div class="vl" style="left:1008px;top:492px;height:17px;background:#d9d9d9"></div>
<div class="vl" style="left:1196px;top:492px;height:17px;background:#d9d9d9"></div>
<div class="vl" style="left:1267px;top:492px;height:17px;background:#d9d9d9"></div>
<div class="vl" style="left:145px;top:529px;height:17px;background:#d9d9d9"></div>
<div class="vl" style="left:478px;top:529px;height:17px;background:#d9d9d9"></div>
<div class="vl" style="left:739px;top:529px;height:17px;background:#d9d9d9"></div>
<div class="vl" style="left:875px;top:529px;height:17px;background:#d9d9d9"></div>
<div class="vl" style="left:1008px;top:529px;height:17px;background:#d9d9d9"></div>
<div class="vl" style="left:1196px;top:529px;height:17px;background:#d9d9d9"></div>
<div class="vl" style="left:1267px;top:529px;height:17px;background:#d9d9d9"></div>
<div class="vl" style="left:145px;top:565px;height:17px;background:#d9d9d9"></div>
<div class="vl" style="left:478px;top:565px;height:17px;background:#d9d9d9"></div>
<div class="vl" style="left:739px;top:565px;height:17px;background:#d9d9d9"></div>
<div class="vl" style="left:875px;top:565px;height:17px;background:#d9d9d9"></div>
<div class="vl" style="left:1008px;top:565px;height:17px;background:#d9d9d9"></div>
<div class="vl" style="left:1196px;top:565px;height:17px;background:#d9d9d9"></div>
<div class="vl" style="left:1267px;top:565px;height:17px;background:#d9d9d9"></div>
<div class="vl" style="left:145px;top:601px;height:17px;background:#d9d9d9"></div>
<div class="vl" style="left:478px;top:601px;height:17px;background:#d9d9d9"></div>
<div class="vl" style="left:739px;top:601px;height:17px;background:#d9d9d9"></div>
<div class="vl" style="left:875px;top:601px;height:17px;background:#d9d9d9"></div>
<div class="vl" style="left:1008px;top:601px;height:17px;background:#d9d9d9"></div>
<div class="vl" style="left:1196px;top:601px;height:17px;background:#d9d9d9"></div>
<div class="vl" style="left:1267px;top:601px;height:17px;background:#d9d9d9"></div>
<div class="vl" style="left:145px;top:637px;height:17px;background:#d9d9d9"></div>
<div class="vl" style="left:478px;top:637px;height:17px;background:#d9d9d9"></div>
<div class="vl" style="left:739px;top:637px;height:17px;background:#d9d9d9"></div>
<div class="vl" style="left:875px;top:637px;height:17px;background:#d9d9d9"></div>
<div class="vl" style="left:1008px;top:637px;height:17px;background:#d9d9d9"></div>
<div class="vl" style="left:1196px;top:637px;height:17px;background:#d9d9d9"></div>
<div class="vl" style="left:1267px;top:637px;height:17px;background:#d9d9d9"></div>
<div class="vl" style="left:25px;top:41px;height:631px;background:#c6c6c6"></div>
<div class="vl" style="left:1426px;top:41px;height:17px;background:#cfcfcf"></div>
<div class="vl" style="left:1426px;top:58px;height:615px;background:#a8a8a8"></div>
<div class="abs" style="left:0;top:673px;width:1445px;height:19px;background:#e6e6e6"></div>
<div class="hl" style="left:0;top:672px;width:1427px;background:#b2b2b2"></div>
<div class="hl" style="left:0;top:673px;width:1427px;background:#dcdcdc"></div>
<div class="abs" style="left:1427px;top:58px;width:18px;height:615px;background:#f0f0f0"></div>
<div class="box" style="left:1429px;top:42px;width:15px;height:15px;border-color:#a9a9a9;border-radius:1.5px"></div>
<div class="abs" style="left:1433px;top:47px;border-left:3.5px solid transparent;border-right:3.5px solid transparent;border-bottom:4px solid #1a1a1a"></div>
<div class="box" style="left:1429px;top:56px;width:15px;height:20px;border-color:#a9a9a9;border-radius:1.5px"></div>
<div class="box" style="left:1429px;top:658px;width:15px;height:15px;border-color:#a9a9a9;border-radius:1.5px"></div>
<div class="abs" style="left:1433px;top:664px;border-left:3.5px solid transparent;border-right:3.5px solid transparent;border-top:4px solid #1a1a1a"></div>
<div class="abs" style="left:78px;top:672px;width:186px;height:20px;background:#fff;box-sizing:border-box;border-right:1px solid #b5b5b5"></div>
<div class="abs" style="left:78px;top:690px;width:186px;height:1.4px;background:#1e7145"></div>
<div class="abs" style="left:78px;top:673px;width:186px;text-align:center;font-size:12.6px;font-weight:bold;color:#217346;line-height:17px;letter-spacing:-0.03px">Kampfsportschulen Schweiz</div>
<div class="abs" style="left:21px;top:679px;border-top:3.5px solid transparent;border-bottom:3.5px solid transparent;border-right:4px solid #c3c3c3"></div>
<div class="abs" style="left:43px;top:679px;border-top:3.5px solid transparent;border-bottom:3.5px solid transparent;border-left:4px solid #c3c3c3"></div>
<svg class="abs" style="left:288px;top:674px" width="17" height="17" viewBox="0 0 17 17"><circle cx="8.5" cy="8.8" r="7.1" fill="none" stroke="#8c8c8c" stroke-width="1.1"/><path d="M5 8.8h7M8.5 5.3v7" stroke="#777" stroke-width="1.4"/></svg>
<div class="abs" style="left:865px;top:677.8px;width:2px;height:2px;background:#b0b0b0"></div>
<div class="abs" style="left:865px;top:681.5px;width:2px;height:2px;background:#b0b0b0"></div>
<div class="abs" style="left:865px;top:685.4px;width:2px;height:2px;background:#b0b0b0"></div>
<div class="box" style="left:879px;top:675px;width:15px;height:15px;border-color:#a9a9a9;border-radius:1.5px"></div>
<div class="abs" style="left:883px;top:679px;border-top:3.5px solid transparent;border-bottom:3.5px solid transparent;border-right:4px solid #1a1a1a"></div>
<div class="box" style="left:893px;top:675px;width:329px;height:15px;border-color:#a9a9a9;border-radius:1.5px"></div>
<div class="box" style="left:1412px;top:675px;width:15px;height:15px;border-color:#a9a9a9;border-radius:1.5px"></div>
<div class="abs" style="left:1418px;top:679px;border-top:3.5px solid transparent;border-bottom:3.5px solid transparent;border-left:4px solid #1a1a1a"></div>
</body></html>
